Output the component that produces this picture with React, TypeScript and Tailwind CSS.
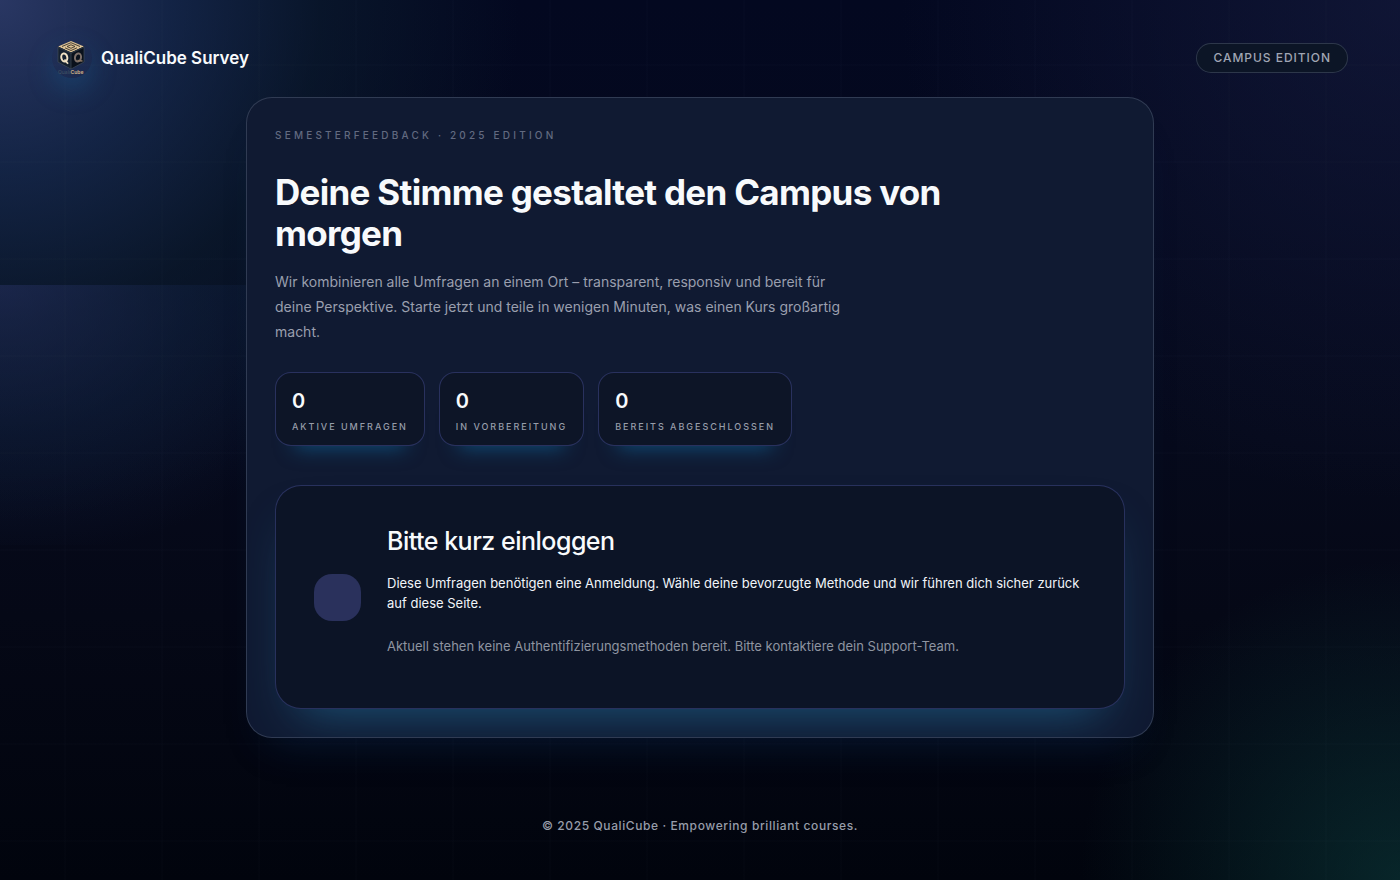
import { clsx } from "clsx";

interface Stat {
  label: string;
  value: number;
}

const STATS: Stat[] = [
  { label: "Aktive Umfragen", value: 0 },
  { label: "In Vorbereitung", value: 0 },
  { label: "Bereits abgeschlossen", value: 0 },
];

function CubeLogo() {
  return (
    <svg viewBox="0 0 40 40" className="h-10 w-10" role="img" aria-label="QualiCube">
      <path d="M19 3 32 8.500 19 14.500 6 8.500Z" fill="#dcc294" />
      <path d="M10 8.500 19 4.700 28 8.500M13 9.800 19 12.500 25 9.800M15 8.500 19 6.800 23 8.500 19 10.300Z" fill="none" stroke="#3a332c" strokeWidth="0.900" />
      <path d="M6 8.500 19 14.500V31L6 24Z" fill="#14202f" />
      <path d="M32 8.500 19 14.500V31L32 24Z" fill="#0a111c" />
      <path d="M6 9.200 19 15.200 32 9.200" fill="none" stroke="#2c3640" strokeWidth="1.200" />
      <path d="M19 15V31M6 9V24L19 31 32 24V9" fill="none" stroke="#3f4b57" strokeWidth="0.700" />
      <ellipse cx="12.300" cy="19.500" rx="3" ry="4" fill="none" stroke="#efe0c4" strokeWidth="2" transform="rotate(-12 12.300 19.500)" />
      <path d="m12.500 21.500 3.500 4.300" stroke="#efe0c4" strokeWidth="1.800" />
      <ellipse cx="26" cy="19.500" rx="3" ry="4" fill="none" stroke="#7d706a" strokeWidth="2" transform="rotate(12 26 19.500)" />
      <path d="m25.500 22.500 5 0.500" stroke="#8b7763" strokeWidth="1.500" />
      <text x="6" y="36" fontSize="5" fontFamily="Inter, sans-serif" fontWeight="500" fill="#3d5063">
        Quali
      </text>
      <text x="18.500" y="36" fontSize="5" fontFamily="Inter, sans-serif" fontWeight="700" fill="#c3a982">
        Cube
      </text>
    </svg>
  );
}

function Header() {
  return (
    <header className="flex items-center justify-between gap-4 px-6 pt-[38px] md:px-[52px]">
      <div className="flex items-center gap-[9px]">
        <div className="rounded-full shadow-[0_12px_26px_rgba(20,116,170,0.28)]">
          <CubeLogo />
        </div>
        <span className="text-[17px] font-semibold leading-6 text-slate-50">QualiCube Survey</span>
      </div>
      <span className="rounded-full border border-slate-400/25 bg-[#0c1526] px-4 py-[5px] text-[12px] font-medium uppercase leading-[18px] tracking-[0.08em] text-[#a0a6b4]">
        Campus Edition
      </span>
    </header>
  );
}

function StatCard({ label, value }: Stat) {
  return (
    <div className="rounded-2xl border border-indigo-400/25 bg-[#0d1527] px-4 pb-[11px] pt-[14px] shadow-[0_22px_20px_-20px_rgba(14,116,174,0.55)]">
      <div className="text-[20px] font-semibold leading-7 text-slate-50">{value}</div>
      <div className="mt-[5px] text-[9px] font-medium uppercase leading-[14px] tracking-[0.22em] text-[#979daa]">{label}</div>
    </div>
  );
}

function LoginPanel() {
  return (
    <section className="mt-[39px] flex flex-col items-start gap-[26px] rounded-[26px] border border-indigo-400/25 bg-[#0c1426] p-6 shadow-[0_26px_50px_-24px_rgba(35,120,165,0.65)] sm:flex-row sm:items-center sm:p-[38px]">
      <div className="h-[47px] w-[47px] shrink-0 rounded-[18px] bg-[#2a315c]" />
      <div className="min-w-0 flex-1">
        <h2 className="text-[25px] font-medium leading-[34px] tracking-[-0.02em] text-slate-50">Bitte kurz einloggen</h2>
        <p className="mt-[15px] text-[13px] leading-5 text-slate-100">
          Diese Umfragen benötigen eine Anmeldung. Wähle deine bevorzugte Methode und wir führen dich sicher zurück auf
          diese Seite.
        </p>
        <p className="mb-[14px] mt-[23px] text-[13px] leading-5 text-[#8f95a1]">
          Aktuell stehen keine Authentifizierungsmethoden bereit. Bitte kontaktiere dein Support-Team.
        </p>
      </div>
    </section>
  );
}

export default function App() {
  return (
    <div
      className={clsx(
        "relative flex min-h-screen flex-col bg-[#020510] font-['Inter','Liberation_Sans',sans-serif] text-slate-50",
        "bg-[radial-gradient(circle_at_0_0,rgba(62,80,135,0.65),rgba(32,58,100,0.55)_170px,rgba(14,34,52,0.5)_320px,transparent_520px),radial-gradient(circle_at_100%_0,rgba(26,32,70,0.55),transparent_500px),radial-gradient(circle_at_100%_100%,rgba(16,78,76,0.45),transparent_320px),linear-gradient(#030820,#060a1c_50%,#050816_70%,#01040d)]"
      )}
    >
      {/* Soft band on the left edge */}
      <div className="pointer-events-none absolute left-0 top-[285px] h-[260px] w-[340px] bg-[radial-gradient(ellipse_at_0_0,rgba(40,50,100,0.5),rgba(18,34,68,0.4)_40%,transparent_75%)]" />
      {/* Faint grid */}
      <div className="pointer-events-none absolute inset-0 bg-[linear-gradient(90deg,transparent_64px,rgba(148,163,184,0.01)_64px,rgba(148,163,184,0.01)_66px,transparent_66px),linear-gradient(transparent_64px,rgba(148,163,184,0.01)_64px,rgba(148,163,184,0.01)_66px,transparent_66px)] bg-[size:97px_97px]" />

      <div className="relative flex flex-1 flex-col">
        <Header />

        <main className="mx-auto mt-[19px] w-full max-w-[908px] px-4 lg:px-0">
          <div className="overflow-hidden rounded-[26px] border border-slate-400/25 bg-[#101a32] p-5 shadow-[0_26px_40px_-26px_rgba(10,50,100,0.45)] sm:p-7">
            <p className="mt-px text-[10px] font-medium uppercase leading-4 tracking-[0.32em] text-[#626a80]">
              Semesterfeedback · 2025 Edition
            </p>
            <h1 className="mt-[29px] max-w-[700px] text-[35px] font-bold leading-[41px] tracking-[-0.02em] text-slate-50">
              Deine Stimme gestaltet den Campus von morgen
            </h1>
            <p className="mt-[15px] max-w-[580px] text-[14px] leading-[25px] text-[#9a9fae]">
              Wir kombinieren alle Umfragen an einem Ort – transparent, responsiv und bereit für deine Perspektive.
              Starte jetzt und teile in wenigen Minuten, was einen Kurs großartig macht.
            </p>
            <div className="mt-7 flex flex-wrap gap-[14px]">
              {STATS.map((stat) => (
                <StatCard key={stat.label} {...stat} />
              ))}
            </div>
            <LoginPanel />
          </div>
        </main>

        <footer className="mt-auto px-6 pb-[45px] pt-10 text-center text-[12px] font-medium leading-[18px] tracking-[0.05em] text-[#979daa]">
          © 2025 QualiCube · Empowering brilliant courses.
        </footer>
      </div>
    </div>
  );
}
